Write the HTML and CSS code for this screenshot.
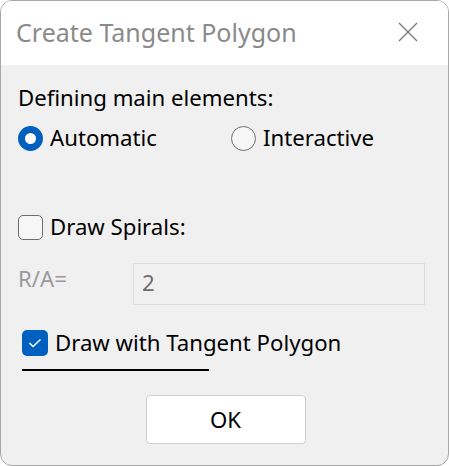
FILE: index.html
```html
<!DOCTYPE html>
<html>
<head>
<meta charset="utf-8">
<link rel="stylesheet" href="styles.css">
</head>
<body>
<div class="window">
  <div class="titlebar">
    <span class="title">Create Tangent Polygon</span>
    <svg class="close" width="20" height="20" viewBox="0 0 20 20"><path d="M1 1 L19 19 M19 1 L1 19" stroke="#7a7a7a" stroke-width="1.4" fill="none"/></svg>
  </div>
  <div class="content">
    <div class="label">Defining main elements:</div>
    <div class="radios">
      <div class="opt auto"><span class="radio on"></span><span>Automatic</span></div>
      <div class="opt"><span class="radio"></span><span>Interactive</span></div>
    </div>
    <div class="opt spirals"><span class="check"></span><span>Draw Spirals:</span></div>
    <div class="ra">
      <span class="ralabel">R/A=</span>
      <div class="input">2</div>
    </div>
    <div class="polywrap">
      <div class="opt poly"><span class="check on"><svg width="14" height="10" viewBox="0 0 14 10"><path d="M1.5 5 L5 8.5 L12.5 1.5" stroke="#fff" stroke-width="1.5" fill="none"/></svg></span><span>Draw with Tangent Polygon</span></div>
      <div class="focusline"></div>
    </div>
    <div class="btnrow"><div class="btn">OK</div></div>
  </div>
</div>
</body>
</html>
```
FILE: styles.css
```css
* { box-sizing: border-box; }
html, body { margin: 0; padding: 0; background: #fff; }
body { width: 449px; height: 466px; overflow: hidden; font-family: "Noto Sans", "Open Sans", sans-serif; }
.window {
  width: 449px; height: 466px;
  border: 1px solid #a8a8a8;
  border-radius: 12px;
  overflow: hidden;
  background: #f0f0f0;
  display: flex; flex-direction: column;
}
.titlebar {
  height: 64px; background: #fff;
  display: flex; align-items: center; justify-content: space-between;
  padding: 0 30px 0 15px;
}
.title { font-size: 25px; color: #8a8a8a; padding-bottom: 2px; }
.close { margin-top: -2px; }
.content { padding: 18px 0 0 17px; color: #000; font-size: 22.2px; }
.label { line-height: 30px; height: 30px; }
.radios { display: flex; margin-top: 10px; height: 30px; align-items: center; }
.opt { display: flex; align-items: center; gap: 7px; line-height: 30px; }
.auto { width: 213px; }
.radio {
  width: 25px; height: 25px; border-radius: 50%;
  border: 1.5px solid #6e6e6e; background: #f6f6f6; flex: none;
}
.radio.on { border: 7px solid #0060c0; background: #fff; }
.spirals { margin-top: 59px; height: 30px; }
.check {
  width: 25px; height: 25px; border-radius: 5px;
  border: 1.5px solid #6e6e6e; background: #f6f6f6; flex: none;
  display: flex; align-items: center; justify-content: center;
}
.check.on { border: none; background: #0060c0; width: 26px; height: 26px; }
.ra { display: flex; align-items: flex-start; margin-top: 21px; }
.ralabel { color: #9a9a9a; width: 115px; line-height: 30px; margin-top: 1px; }
.input {
  width: 292px; height: 42px;
  border: 1px solid #dcdcdc;
  color: #6d6d6d; padding: 4px 0 0 8px; line-height: 30px;
}
.polywrap { margin-top: 23px; padding-left: 4px; width: 192px; }
.poly { white-space: nowrap; }
.focusline { height: 2px; background: #000; width: 187px; margin-top: 11px; }
.btnrow { display: flex; justify-content: center; margin-top: 24px; padding-right: 17px; }
.btn {
  width: 160px; height: 49px; background: #fff;
  border: 1px solid #cfcfcf; border-radius: 4px;
  display: flex; align-items: center; justify-content: center;
  font-size: 22.2px; margin-left: 2px;
}
```
